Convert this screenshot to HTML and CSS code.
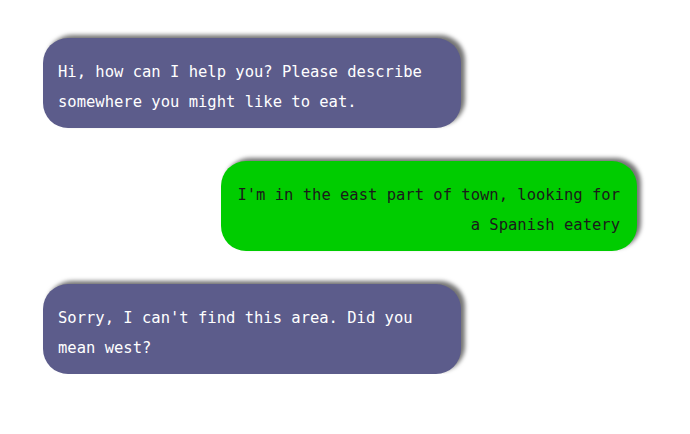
FILE: index.html
```html
<!DOCTYPE html>
<html>
<head>
<meta charset="utf-8">
<link rel="stylesheet" href="styles.css">
</head>
<body>
<div class="chat">
  <div class="msg bot">Hi, how can I help you? Please describe somewhere you might like to eat.</div>
  <div class="msg user">I'm in the east part of town, looking for a Spanish eatery</div>
  <div class="msg bot">Sorry, I can't find this area. Did you mean west?</div>
</div>
</body>
</html>
```
FILE: styles.css
```css
html, body {
  margin: 0;
  padding: 0;
  background: #ffffff;
}
.chat {
  width: 594px;
  margin-left: 43px;
  padding-top: 38px;
  display: flex;
  flex-direction: column;
  gap: 33px;
}
.msg {
  box-sizing: border-box;
  width: 418px;
  padding: 19px 17px 11px 15px;
  border-radius: 25px;
  font-family: "DejaVu Sans Mono", monospace;
  font-size: 15.5px;
  line-height: 30px;
  box-shadow: 4px -3px 4px rgba(0, 0, 0, 0.55);
}
.bot {
  align-self: flex-start;
  background: #5c5c8b;
  color: #ffffff;
}
.user {
  align-self: flex-end;
  width: 416px;
  background: #00cc00;
  color: #1a1a1a;
  text-align: right;
}
```
